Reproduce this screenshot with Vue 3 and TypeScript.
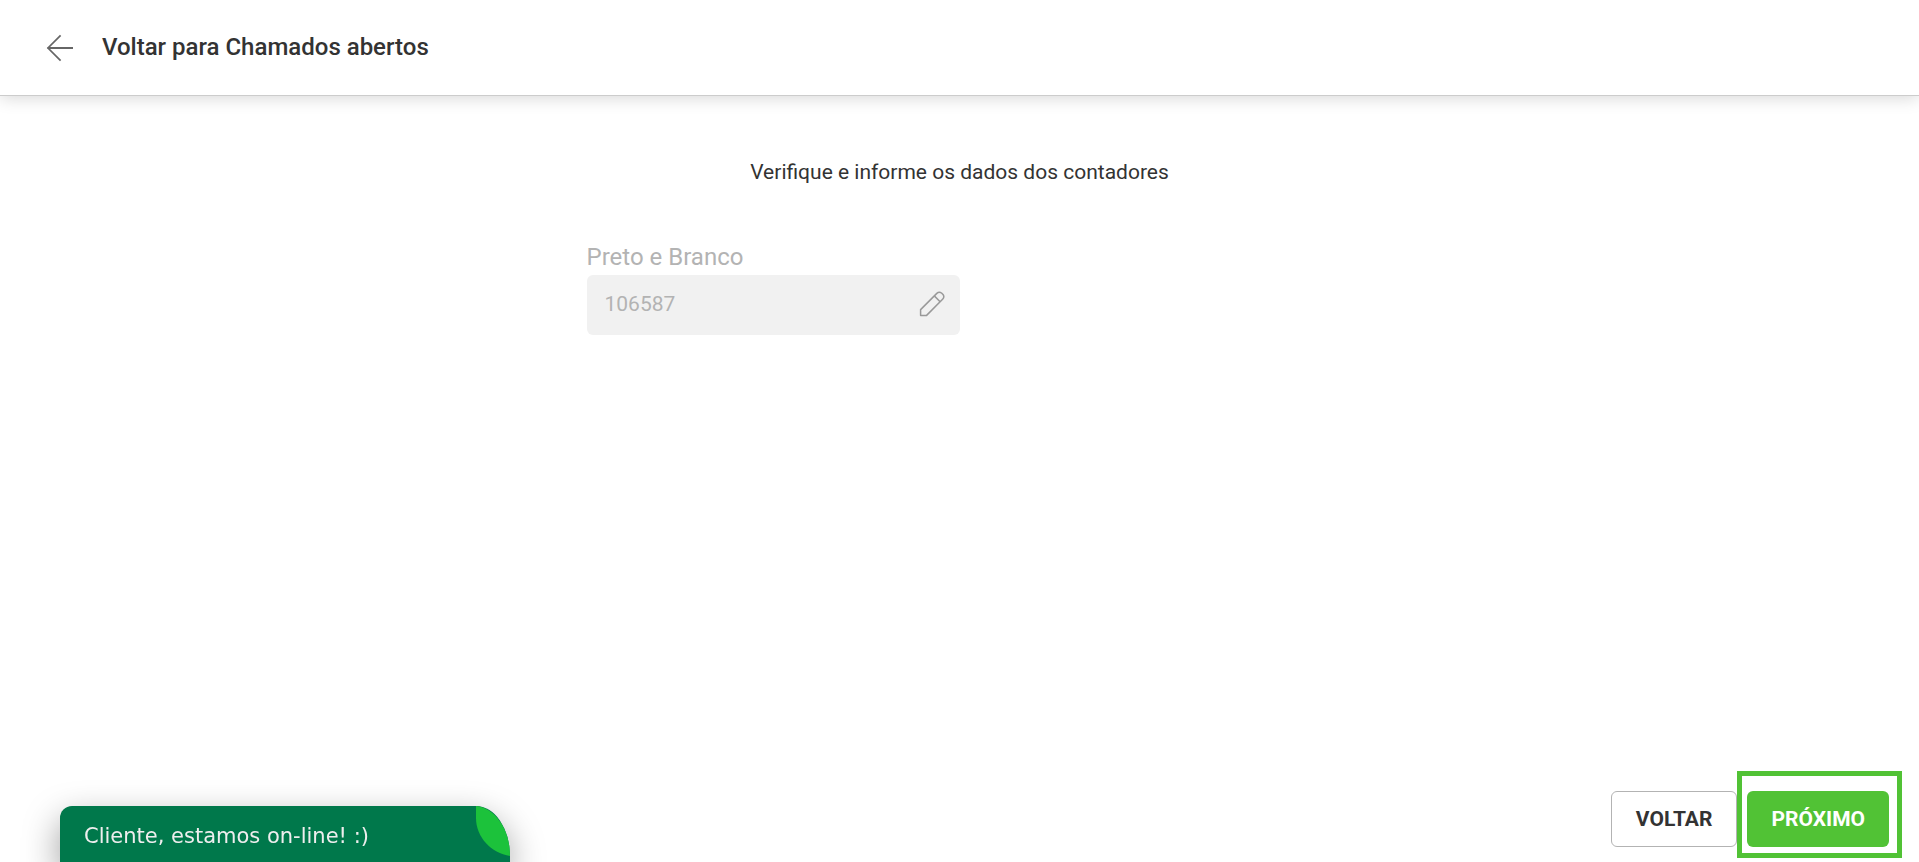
<script setup lang="ts">
import { ref } from 'vue'

const counter = ref('106587')
const editing = ref(false)
</script>

<template>
  <div class="page">
    <header class="topbar">
      <a class="back" href="#" aria-label="Voltar">
        <svg width="28" height="28" viewBox="0 0 28 28" fill="none" stroke="#666" aria-hidden="true">
          <path d="M27 14H1.6" stroke-width="2" />
          <path d="M14.6 1.4L2 14l12.6 12.6" stroke-width="1.7" />
        </svg>
      </a>
      <h1 class="title">Voltar para Chamados abertos</h1>
    </header>

    <main class="content">
      <p class="lead">Verifique e informe os dados dos contadores</p>
      <form class="counters" @submit.prevent>
        <div class="counter">
          <label class="label" for="mono">Preto e Branco</label>
          <div class="field">
            <input id="mono" v-model="counter" class="input" type="text" inputmode="numeric" :readonly="!editing" />
            <button class="edit" type="button" aria-label="Editar" @click="editing = !editing">
              <svg width="26" height="26" viewBox="0 0 26 26" fill="none" stroke="#999" stroke-width="1.5" stroke-linejoin="round" aria-hidden="true">
                <path d="M1.6 24.4V18.6L17.8 2.4Q20.1 .2 22.5 2L24 3.5Q25.8 5.9 23.6 8.2L7.6 24.4Z" />
                <path d="M15.3 4.9L21.1 10.7" />
              </svg>
            </button>
          </div>
        </div>
      </form>
    </main>

    <footer class="actions">
      <button class="btn" type="button">VOLTAR</button>
      <button class="btn primary" type="button">PRÓXIMO</button>
    </footer>

    <button class="chat" type="button">
      Cliente, estamos on-line! :)
      <svg class="leaf" width="34" height="50" viewBox="0 0 34 50" aria-hidden="true">
        <path d="M0 0C19 2 34 23 34 50C15 47 0 31 0 12Z" fill="#1cc23b" />
      </svg>
    </button>
  </div>
</template>

<style>
body {
  margin: 0;
  background: #fff;
}
</style>

<style scoped>
.page {
  box-sizing: border-box;
  display: flex;
  flex-direction: column;
  min-height: 100vh;
  font-family: Roboto, "Liberation Sans", sans-serif;
  color: #333;
}
.topbar {
  display: flex;
  align-items: center;
  gap: 28px;
  height: 95px;
  padding: 0 46px;
  border-bottom: 1px solid #ccc;
  box-shadow: 0 2px 16px rgba(0, 0, 0, 0.16);
}
.back {
  display: flex;
}
.title {
  margin: 0;
  padding-bottom: 2px;
  font-size: 24px;
  font-weight: 500;
  line-height: 32px;
}
.content {
  display: flex;
  flex-direction: column;
  align-items: center;
  padding-top: 60px;
}
.lead {
  margin: 0;
  font-size: 21px;
  line-height: 32px;
}
.counters {
  display: grid;
  grid-template-columns: 1fr 1fr;
  width: 746px;
  max-width: 100%;
  margin-top: 53px;
}
.label {
  display: block;
  font-size: 24px;
  line-height: 32px;
  margin-bottom: 2px;
  color: #b3b3b3;
}
.field {
  box-sizing: border-box;
  display: flex;
  align-items: center;
  height: 60px;
  padding: 0 15px 2px 18px;
  border-radius: 6px;
  background: #f1f1f1;
}
.input {
  flex: 1;
  min-width: 0;
  padding: 0;
  border: 0;
  outline: 0;
  background: none;
  font: inherit;
  font-size: 21px;
  color: #b3b3b3;
}
.edit {
  display: flex;
  padding: 0;
  border: 0;
  background: none;
  cursor: pointer;
}
.actions {
  display: flex;
  justify-content: flex-end;
  gap: 10px;
  margin-top: auto;
  padding: 0 30px 15px;
}
.btn {
  position: relative;
  height: 56px;
  padding: 0 24px;
  border: 1px solid #b3b3b3;
  border-radius: 6px;
  background: #fff;
  font: inherit;
  font-size: 21px;
  font-weight: 700;
  color: #333;
  cursor: pointer;
}
.primary {
  border: 0;
  background: #51c235;
  color: #fff;
}
.primary::after {
  content: "";
  position: absolute;
  inset: -20px -13px -11px -10px;
  border: 5px solid #51c235;
}
.chat {
  position: fixed;
  left: 60px;
  bottom: 0;
  width: 450px;
  height: 56px;
  padding: 4px 24px 0;
  border: 0;
  border-radius: 12px 34px 0 0 / 12px 50px 0 0;
  background: #00784b;
  box-shadow: 0 14px 36px rgba(0, 0, 0, 0.4);
  font-family: "DejaVu Sans", sans-serif;
  font-size: 21px;
  line-height: 32px;
  text-align: left;
  color: #eee;
  cursor: pointer;
}
.leaf {
  position: absolute;
  top: 0;
  right: 0;
}
</style>
